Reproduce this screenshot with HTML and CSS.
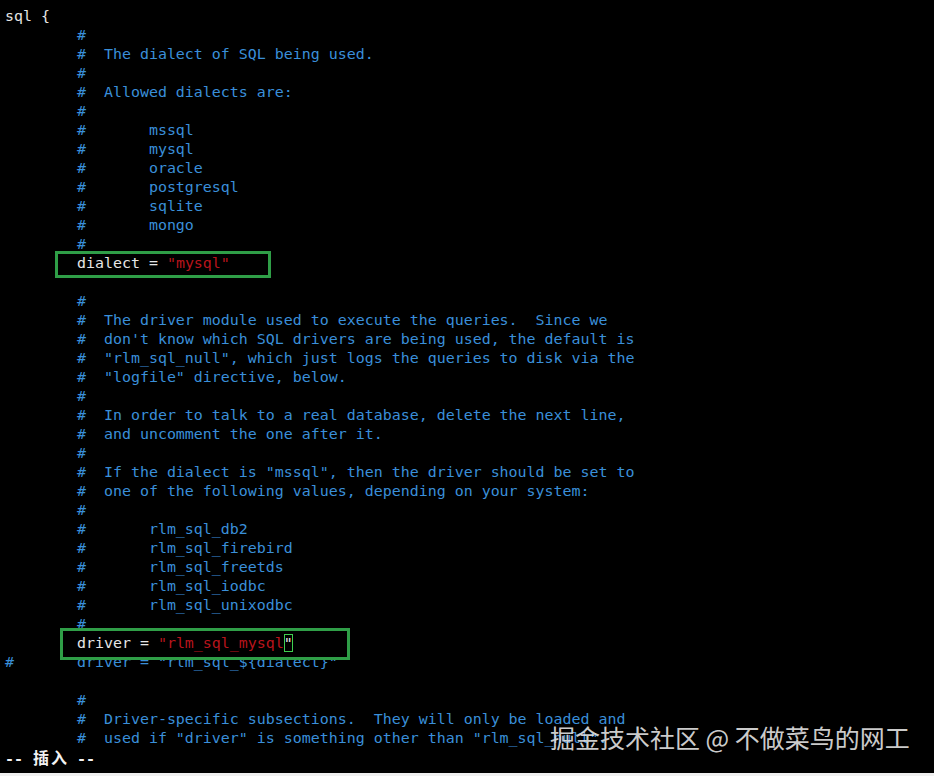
FILE: index.html
```html
<!DOCTYPE html>
<html lang="zh-CN">
<head>
<meta charset="utf-8">
<title>vim sql</title>
<link rel="stylesheet" href="styles.css">
</head>
<body>
<div class="term">
<div class="ln">sql {</div>
<div class="ln c">        #</div>
<div class="ln c">        #  The dialect of SQL being used.</div>
<div class="ln c">        #</div>
<div class="ln c">        #  Allowed dialects are:</div>
<div class="ln c">        #</div>
<div class="ln c">        #       mssql</div>
<div class="ln c">        #       mysql</div>
<div class="ln c">        #       oracle</div>
<div class="ln c">        #       postgresql</div>
<div class="ln c">        #       sqlite</div>
<div class="ln c">        #       mongo</div>
<div class="ln c">        #</div>
<div class="ln">        dialect = <span class="s">"mysql"</span></div>
<div class="ln"> </div>
<div class="ln c">        #</div>
<div class="ln c">        #  The driver module used to execute the queries.  Since we</div>
<div class="ln c">        #  don't know which SQL drivers are being used, the default is</div>
<div class="ln c">        #  "rlm_sql_null", which just logs the queries to disk via the</div>
<div class="ln c">        #  "logfile" directive, below.</div>
<div class="ln c">        #</div>
<div class="ln c">        #  In order to talk to a real database, delete the next line,</div>
<div class="ln c">        #  and uncomment the one after it.</div>
<div class="ln c">        #</div>
<div class="ln c">        #  If the dialect is "mssql", then the driver should be set to</div>
<div class="ln c">        #  one of the following values, depending on your system:</div>
<div class="ln c">        #</div>
<div class="ln c">        #       rlm_sql_db2</div>
<div class="ln c">        #       rlm_sql_firebird</div>
<div class="ln c">        #       rlm_sql_freetds</div>
<div class="ln c">        #       rlm_sql_iodbc</div>
<div class="ln c">        #       rlm_sql_unixodbc</div>
<div class="ln c">        #</div>
<div class="ln top">        driver = <span class="s">"rlm_sql_mysql</span><span class="cursor">"</span></div>
<div class="ln c">#       driver = "rlm_sql_${dialect}"</div>
<div class="ln"> </div>
<div class="ln c">        #</div>
<div class="ln c">        #  Driver-specific subsections.  They will only be loaded and</div>
<div class="ln c">        #  used if "driver" is something other than "rlm_sql_null".</div>
<div class="ln mode">-- <span class="cjk">插</span><span class="cjk">入</span> --</div>

<div class="hl hl-dialect"></div>
<div class="hl hl-driver"></div>
<div class="watermark">掘金技术社区 @ 不做菜鸟的网工</div>
</div>
</body>
</html>
```

FILE: styles.css
```css
html, body {
  margin: 0;
  padding: 0;
  background: #f0f0f0;
}

.term {
  position: relative;
  width: 934px;
  height: 773px;
  background: #000;
  box-sizing: border-box;
  padding: 7px 0 0 5px;
  overflow: hidden;
  font-family: "DejaVu Sans Mono", "Noto Sans CJK SC", monospace;
  font-size: 14.95px;
  color: #e6e6e6;
}

.ln {
  height: 19px;
  line-height: 19px;
  white-space: pre;
}

.c {
  color: #3a8fd9;
}

.s {
  color: #b8141c;
}

.top {
  position: relative;
  z-index: 2;
}

.cursor {
  color: #e6e6e6;
  outline: 1px solid #3fcf4f;
  outline-offset: -1px;
}

.mode {
  font-weight: bold;
  color: #f2f2f2;
}

.cjk {
  display: inline-block;
  width: 18px;
  font-family: "Noto Sans CJK SC", sans-serif;
  font-size: 16px;
  text-align: center;
}

.hl {
  position: absolute;
  border: 3px solid #2f9e47;
  box-sizing: border-box;
}

.hl-dialect {
  left: 55px;
  top: 251px;
  width: 216px;
  height: 27px;
}

.hl-driver {
  left: 60px;
  top: 628px;
  width: 290px;
  height: 32px;
  background: #000;
  z-index: 1;
}

.watermark {
  position: absolute;
  left: 550px;
  top: 721px;
  z-index: 3;
  font-family: "Noto Sans CJK SC", sans-serif;
  font-size: 25px;
  line-height: 32px;
  color: rgba(225, 225, 225, 0.92);
  white-space: nowrap;
}
```
